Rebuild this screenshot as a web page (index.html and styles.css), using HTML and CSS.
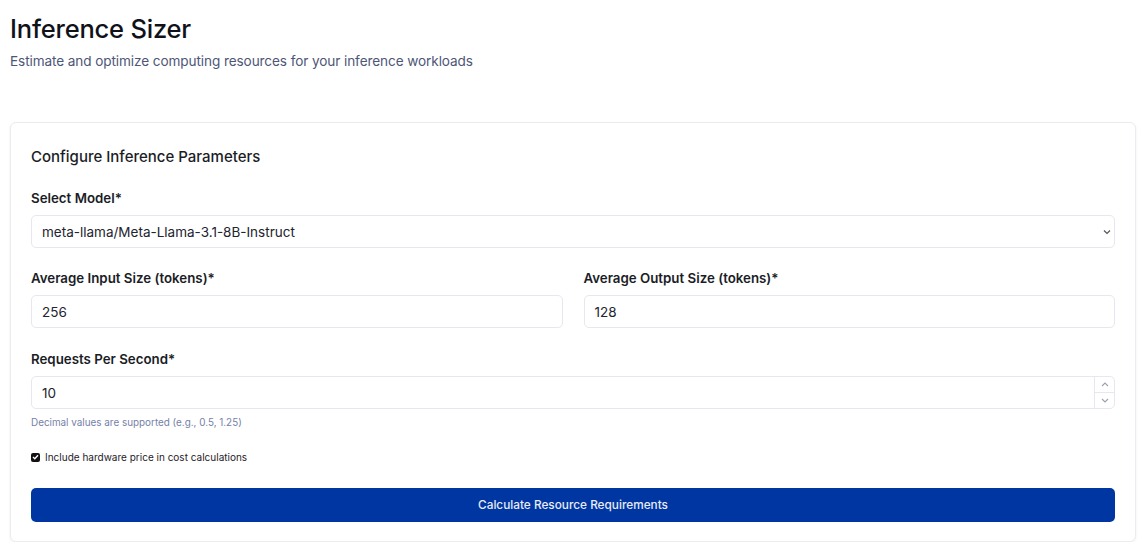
FILE: index.html
```html
<!DOCTYPE html>
<html>
<head>
<meta charset="utf-8">
<link rel="stylesheet" href="styles.css">
</head>
<body>
<div class="page">
  <header class="head">
    <h1 class="title">Inference Sizer</h1>
    <p class="subtitle">Estimate and optimize computing resources for your inference workloads</p>
  </header>
  <section class="card">
    <h2 class="card-title">Configure Inference Parameters</h2>
    <div class="field field-model">
      <label class="label">Select Model*</label>
      <div class="control select">
        <span class="value">meta-llama/Meta-Llama-3.1-8B-Instruct</span>
        <svg class="chev" width="8" height="6" viewBox="0 0 8 6"><path d="M1 1.5 L4 4.5 L7 1.5" fill="none" stroke="#555" stroke-width="1.2"/></svg>
      </div>
    </div>
    <div class="row">
      <div class="field field-row">
        <label class="label">Average Input Size (tokens)*</label>
        <div class="control"><span class="value">256</span></div>
      </div>
      <div class="field field-row">
        <label class="label">Average Output Size (tokens)*</label>
        <div class="control"><span class="value">128</span></div>
      </div>
    </div>
    <div class="field">
      <label class="label">Requests Per Second*</label>
      <div class="control number">
        <span class="value">10</span>
        <div class="spin">
          <div class="spin-btn"><svg width="8" height="5" viewBox="0 0 8 5"><path d="M1 4 L4 1 L7 4" fill="none" stroke="#9aa0b5" stroke-width="1.1"/></svg></div>
          <div class="spin-btn"><svg width="8" height="5" viewBox="0 0 8 5"><path d="M1 1 L4 4 L7 1" fill="none" stroke="#9aa0b5" stroke-width="1.1"/></svg></div>
        </div>
      </div>
      <p class="help">Decimal values are supported (e.g., 0.5, 1.25)</p>
    </div>
    <label class="check">
      <span class="box"><svg width="7" height="6" viewBox="0 0 7 6"><path d="M1 3 L2.8 4.7 L6 1.2" fill="none" stroke="#fff" stroke-width="1.4"/></svg></span>
      <span>Include hardware price in cost calculations</span>
    </label>
    <button class="btn">Calculate Resource Requirements</button>
  </section>
</div>
</body>
</html>
```
FILE: styles.css
```css
* { box-sizing: border-box; }
html, body { margin: 0; padding: 0; background: #fff; }
body { font-family: Inter, "Liberation Sans", sans-serif; color: #14161f; }
.page { padding: 14px 7px 0 10px; }
.head { margin-bottom: 52px; }
.title { margin: 0; font-size: 25.5px; font-weight: 500; letter-spacing: -0.2px; line-height: 30px; color: #10121a; }
.subtitle { margin: 8px 0 0; font-size: 13.6px; line-height: 18px; color: #4d5677; letter-spacing: -0.1px; }
.card {
  border: 1px solid #ececf0; border-radius: 6px; background: #fff;
  box-shadow: 0 1px 3px rgba(0,0,0,0.06);
  padding: 25px 20px 19px 20px;
}
.card-title { margin: 0 0 24px; font-size: 15px; font-weight: 500; line-height: 18px; color: #1b1d26; }
.field { display: flex; flex-direction: column; min-width: 0; margin-bottom: 12px; }
.field-model { margin-bottom: 22px; }
.field-row { margin-bottom: 23px; }
.label { font-size: 13.3px; font-weight: 600; line-height: 16px; color: #1b1d26; margin-bottom: 9px; }
.control {
  height: 33px; border: 1px solid #e6e7f0; border-radius: 5px; background: #fff;
  display: flex; align-items: center; padding: 0 0 0 10px; font-size: 13.5px; color: #22242e;
}
.select .value { flex: 1; }
.select { padding-right: 3px; }
.row { display: grid; grid-template-columns: 1fr 1fr; gap: 21px; }
.number .value { flex: 1; }
.spin { display: flex; flex-direction: column; width: 20px; height: 100%; border-left: 1px solid #e6e7f0; }
.spin-btn { flex: 1; display: flex; align-items: center; justify-content: center; }
.spin-btn + .spin-btn { border-top: 1px solid #e6e7f0; }
.help { margin: 7px 0 0; font-size: 9.9px; color: #7581a8; line-height: 12px; }
.check { display: flex; align-items: center; gap: 5px; font-size: 10px; color: #1f2129; margin: 23px 0 25px; }
.box { width: 9px; height: 9px; border-radius: 2px; background: #111; display: flex; align-items: center; justify-content: center; }
.btn {
  display: block; width: 100%; height: 34px; border: 0; border-radius: 5px;
  background: #0036a2; color: #e8ecf7; font-family: inherit; font-size: 11.8px; font-weight: 500;
}
```
